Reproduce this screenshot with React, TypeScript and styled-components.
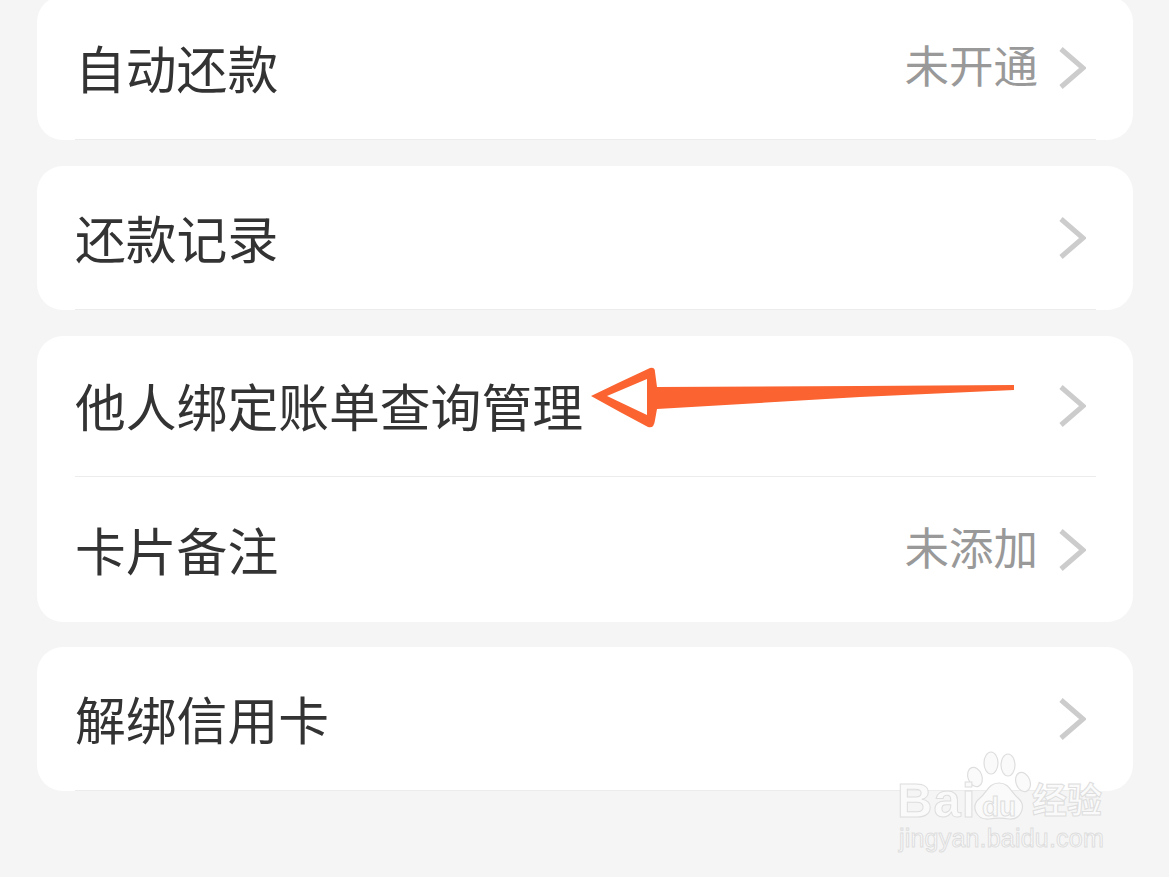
import React from "react";
import styled, { createGlobalStyle } from "styled-components";

const Global = createGlobalStyle`
  html, body { margin: 0; padding: 0; background: #f5f5f5; }
  body { font-family: "Noto Sans CJK SC", "Liberation Sans", sans-serif; }
`;

const Page = styled.main`
  position: relative;
  width: 1169px;
  height: 877px;
  overflow: hidden;
  box-sizing: border-box;
  padding: 0 36px 0 37px;
  background: #f5f5f5;
  display: flex;
  flex-direction: column;
`;

const Card = styled.section<{ $gap?: number }>`
  background: #fff;
  border-radius: 26px;
  margin-top: ${(p) => p.$gap ?? 26}px;
  padding-left: 38px;
  padding-right: 37px;
`;

const Row = styled.div<{ $h: number; $line?: boolean }>`
  height: ${(p) => p.$h}px;
  box-sizing: border-box;
  display: flex;
  align-items: center;
  justify-content: space-between;
  border-bottom: ${(p) => (p.$line ? "1px solid #ececec" : "none")};
`;

const Label = styled.span`
  font-size: 50.8px;
  line-height: 60px;
  color: #333;
  font-weight: 400;
  position: relative;
  top: -1px;
`;

const Right = styled.div`
  display: flex;
  align-items: center;
  gap: 20px;
  padding-right: 10px;
`;

const Value = styled.span`
  font-size: 44.5px;
  line-height: 54px;
  color: #999;
  position: relative;
  top: -4px;
`;

const ChevronSvg = styled.svg`
  width: 28px;
  height: 44px;
  display: block;
  fill: none;
  stroke: #cccccc;
  stroke-width: 5;
`;

const Chevron = () => (
  <ChevronSvg viewBox="0 0 28 44">
    <path d="M3 3 L25 22 L3 41" />
  </ChevronSvg>
);

const ArrowSvg = styled.svg`
  position: absolute;
  left: 585px;
  top: 360px;
  width: 435px;
  height: 75px;
`;

const Watermark = styled.div`
  position: absolute;
  left: 895px;
  top: 750px;
  width: 215px;
  height: 100px;
  color: #fafafa;
  -webkit-text-stroke: 1px #dedede;
`;

const Bai = styled.span`
  position: absolute;
  left: 2px;
  top: 22px;
  font-family: "Liberation Sans", sans-serif;
  font-weight: 700;
  font-size: 49px;
  line-height: 56px;
  letter-spacing: 1px;
`;

const Du = styled.span`
  position: absolute;
  left: 87px;
  top: 41px;
  font-family: "Liberation Sans", sans-serif;
  font-weight: 700;
  font-size: 28px;
  line-height: 32px;
`;

const Jing = styled.span`
  position: absolute;
  left: 137px;
  top: 28px;
  font-family: "Noto Sans CJK SC", sans-serif;
  font-weight: 700;
  font-size: 35px;
  line-height: 40px;
  white-space: nowrap;
`;

const Url = styled.span`
  position: absolute;
  left: 4px;
  top: 74px;
  font-family: "Liberation Sans", sans-serif;
  font-size: 25px;
  line-height: 28px;
  white-space: nowrap;
  letter-spacing: 0.2px;
`;

const PawSvg = styled.svg`
  position: absolute;
  left: 70px;
  top: 0;
  width: 75px;
  height: 72px;
  fill: #fafafa;
  stroke: #dedede;
  stroke-width: 1.2;
`;

export default function App() {
  return (
    <Page>
      <Global />
      <Card $gap={-4}>
        <Row $h={144} $line>
          <Label>自动还款</Label>
          <Right>
            <Value>未开通</Value>
            <Chevron />
          </Right>
        </Row>
      </Card>
      <Card>
        <Row $h={144} $line>
          <Label>还款记录</Label>
          <Right>
            <Chevron />
          </Right>
        </Row>
      </Card>
      <Card>
        <Row $h={141} $line>
          <Label>他人绑定账单查询管理</Label>
          <Right>
            <Chevron />
          </Right>
        </Row>
        <Row $h={145}>
          <Label>卡片备注</Label>
          <Right>
            <Value>未添加</Value>
            <Chevron />
          </Right>
        </Row>
      </Card>
      <Card $gap={25}>
        <Row $h={144} $line>
          <Label>解绑信用卡</Label>
          <Right>
            <Chevron />
          </Right>
        </Row>
      </Card>

      <ArrowSvg viewBox="585 360 435 75">
        <path
          fillRule="evenodd"
          fill="#fb6330"
          d="M591 396 L618 383 L650 368 Q655 367 655 372 L657 387 L860 386 L1014 385 L1014 390 L860 397 L657 409 L655 420 Q654 429 648 427 L620 412 Z M607 396 L647 415 L647 379 Z"
        />
      </ArrowSvg>

      <Watermark>
        <PawSvg viewBox="0 0 75 72">
          <ellipse cx="10" cy="27" rx="7" ry="10" transform="rotate(-20 10 27)" />
          <ellipse cx="26" cy="13" rx="7" ry="11" />
          <ellipse cx="43" cy="15" rx="7" ry="11" />
          <ellipse cx="58" cy="32" rx="7" ry="10" transform="rotate(-20 58 32)" />
          <path d="M34 33 C44 33 46 42 53 48 C62 56 56 70 44 69 C38 68 30 68 24 69 C11 70 5 56 15 48 C22 42 24 33 34 33 Z" />
        </PawSvg>
        <Bai>Bai</Bai>
        <Du>du</Du>
        <Jing>经验</Jing>
        <Url>jingyan.baidu.com</Url>
      </Watermark>
    </Page>
  );
}
